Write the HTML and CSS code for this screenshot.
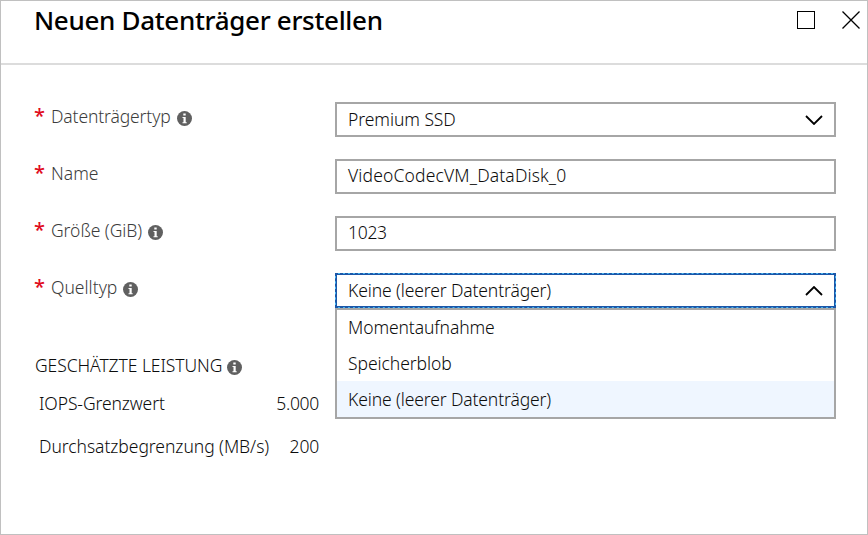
FILE: index.html
```html
<!DOCTYPE html>
<html lang="de">
<head>
<meta charset="utf-8">
<title>Neuen Datenträger erstellen</title>
<link rel="stylesheet" href="styles.css">
</head>
<body>
<svg width="0" height="0" class="defs" aria-hidden="true">
  <symbol id="info" viewBox="0 0 15 15"><circle cx="7.5" cy="7.5" r="7.5" fill="#606060"/><path d="M6.3 2.5h2.4v2H6.3zM5.5 6h3.2v5.2h1v1H5.5v-1h1V7h-1z" fill="#fff"/></symbol>
</svg>
<main class="blade">
  <header class="header">
    <h1 class="title">Neuen Datenträger erstellen</h1>
    <div class="actions">
      <svg width="18" height="18" viewBox="0 0 18 18"><rect x=".5" y=".5" width="17" height="17" fill="none" stroke="#000"/></svg>
      <svg width="18" height="18" viewBox="0 0 18 18"><path d="M.5.5l17 17M17.5.5l-17 17" fill="none" stroke="#000" stroke-width="1.3"/></svg>
    </div>
  </header>
  <form class="form">
    <div class="row">
      <div class="label"><span class="star">*</span><span class="t-type">Datenträgertyp</span><svg class="info"><use href="#info"/></svg></div>
      <div class="field"><span class="v-type">Premium SSD</span><svg class="chevron" viewBox="0 0 18 10"><path d="M1 1l8 8 8-8"/></svg></div>
    </div>
    <div class="row">
      <div class="label"><span class="star">*</span><span class="t-name">Name</span></div>
      <div class="field text"><span class="v-name">VideoCodecVM_DataDisk_0</span></div>
    </div>
    <div class="row">
      <div class="label"><span class="star">*</span><span class="t-size">Größe (GiB)</span><svg class="info"><use href="#info"/></svg></div>
      <div class="field text"><span class="v-size">1023</span></div>
    </div>
    <div class="row">
      <div class="label"><span class="star">*</span><span class="t-source">Quelltyp</span><svg class="info"><use href="#info"/></svg></div>
      <div class="field open"><span class="v-none">Keine (leerer Datenträger)</span><svg class="chevron" viewBox="0 0 18 10"><path d="M1 9l8-8 8 8"/></svg>
        <div class="menu">
          <div class="option"><span class="o-snap">Momentaufnahme</span></div>
          <div class="option"><span class="o-blob">Speicherblob</span></div>
          <div class="option selected"><span class="v-none">Keine (leerer Datenträger)</span></div>
        </div>
      </div>
    </div>
  </form>
  <section class="perf">
    <h2 class="perf-title"><span class="p-head">GESCHÄTZTE LEISTUNG</span><svg class="info"><use href="#info"/></svg></h2>
    <div class="metric"><span class="p-iops">IOPS-Grenzwert</span><span class="p-5000">5.000</span></div>
    <div class="metric"><span class="p-thru">Durchsatzbegrenzung (MB/s)</span><span class="p-200">200</span></div>
  </section>
</main>
</body>
</html>
```
FILE: styles.css
```css
* { box-sizing: border-box; }
body { margin: 0; background: #fff; font: 300 17.5px/24px "Noto Sans", "Open Sans", sans-serif; color: #0c0c0c; white-space: nowrap; }
.defs { position: absolute; }
.blade { width: 868px; height: 535px; border: 1px solid #c0c0c0; overflow: hidden; }
.header { height: 64px; border-bottom: 2px solid #dcdcdc; padding: 0 7px 0 33px; display: flex; justify-content: space-between; }
.title { margin: 1px 0 0; font-size: 26px; line-height: 36px; font-weight: 500; letter-spacing: -.32px; color: #000; }
.actions { display: flex; gap: 27px; padding-top: 10px; }
.form { padding: 37px 31px 0 33px; display: grid; gap: 22px; }
.row { display: grid; grid-template-columns: 301px 501px; height: 35px; }
.label { display: flex; color: #3c3c3c; padding-top: 2px; }
.star { width: 17px; color: #e00b1c; font-size: 20px; font-weight: 500; line-height: 24px; }
.info { width: 15px; height: 15px; flex: none; margin: 7px 0 0 6px; }
.field { position: relative; border: 2px solid #a6a6a6; padding: 0 11px; display: flex; justify-content: space-between; line-height: 31px; }
.text { line-height: 29px; }
.chevron { width: 18px; height: 10px; margin-top: 11px; fill: none; stroke: #000; stroke-width: 1.8; }
.open { border: 1px dashed #1c57a8; background: linear-gradient(#fff, #fff) padding-box, #45b5f0; padding: 1px 12px; box-shadow: inset 0 0 0 1px #1c57a8; }
.menu { position: absolute; left: -1px; top: 34px; width: 501px; height: 111px; background: #fff; border: 2px solid #a6a6a6; }
.option { height: 36px; padding-left: 11px; line-height: 37px; }
.option:first-child { height: 35px; line-height: 35px; }
.selected { background: #eff6ff; }
.perf { width: 319px; padding: 45px 1px 0 34px; }
.perf-title { display: flex; margin: 0; font: inherit; }
.perf-title .info { margin-left: 5px; }
.metric { display: flex; justify-content: space-between; padding-left: 4px; margin-top: 14px; }
.metric + .metric { margin-top: 19px; }
.t-type { letter-spacing: -.13px; }
.t-name { letter-spacing: 0; }
.t-size { letter-spacing: -.05px; }
.t-source { letter-spacing: 0; }
.v-type { letter-spacing: -.06px; }
.v-size { letter-spacing: -.3px; }
.v-name { letter-spacing: .15px; }
.v-none { letter-spacing: -.12px; }
.o-snap { letter-spacing: -.1px; }
.o-blob { letter-spacing: -.06px; }
.p-head { letter-spacing: -.08px; }
.p-iops { letter-spacing: -.1px; }
.p-5000 { letter-spacing: -.3px; }
.p-200 { letter-spacing: -.2px; }
.p-thru { letter-spacing: -.05px; }
```
